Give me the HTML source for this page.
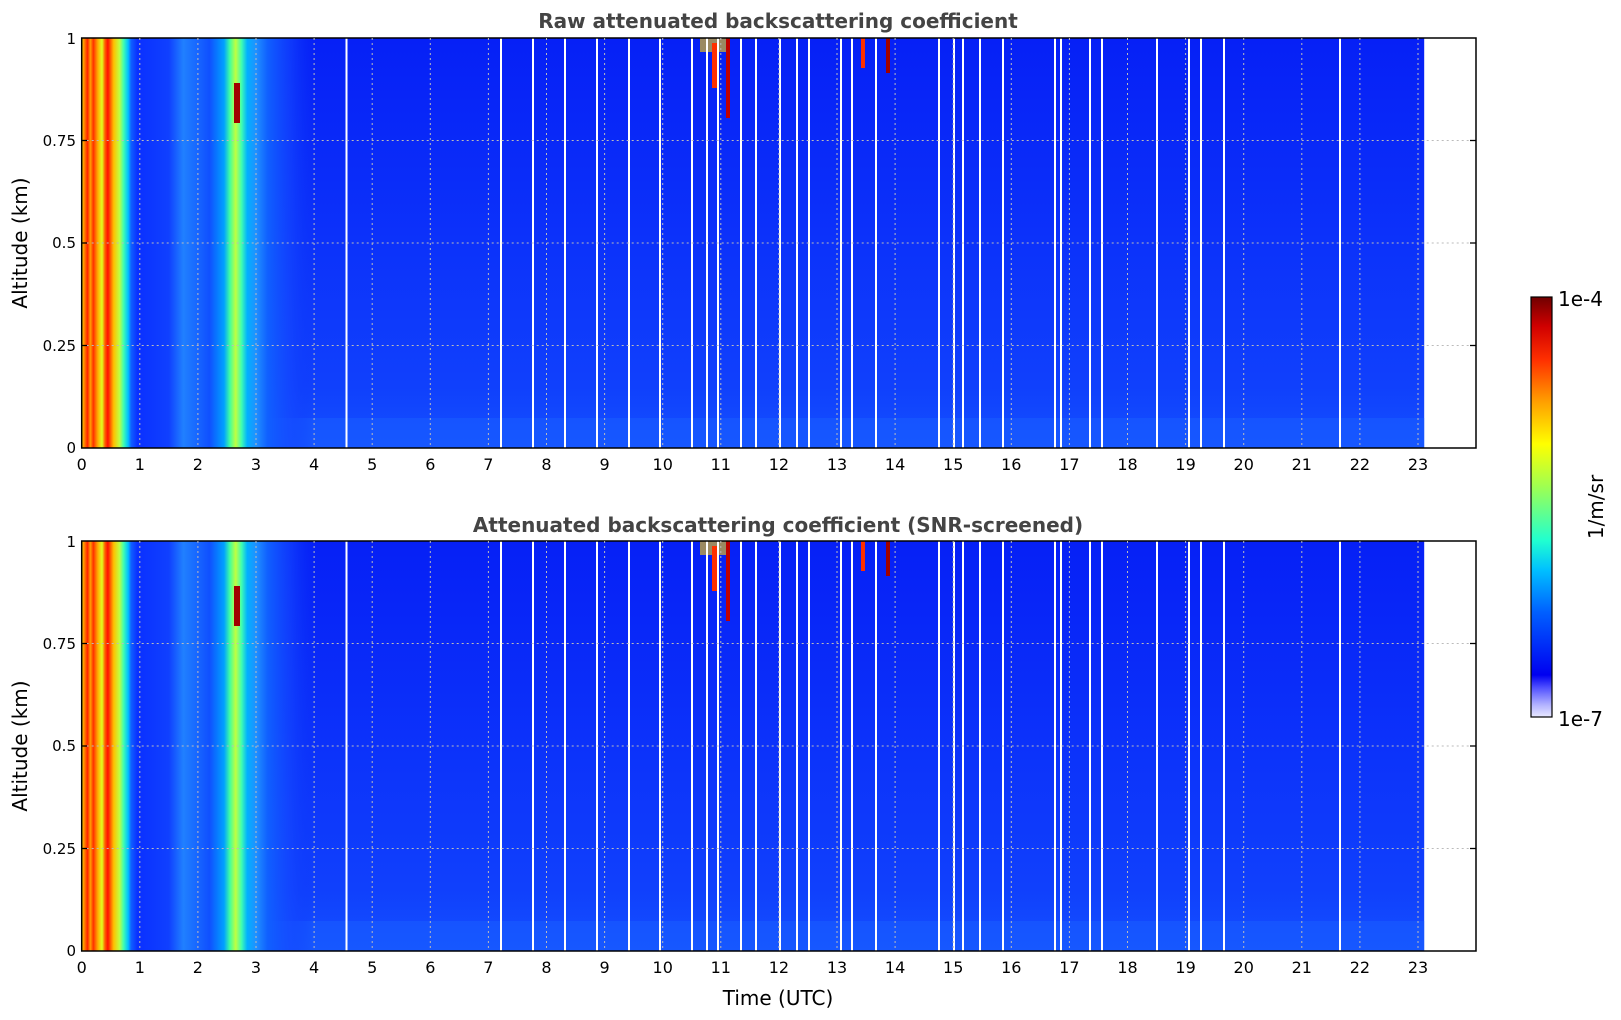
<!DOCTYPE html>
<html><head><meta charset="utf-8"><style>
html,body{margin:0;padding:0;background:#fff;width:1621px;height:1020px;overflow:hidden}
text{font-family:"DejaVu Sans","Liberation Sans",sans-serif}
</style></head><body>
<svg width="1621" height="1020" viewBox="0 0 1621 1020" xmlns="http://www.w3.org/2000/svg">
<defs>
<linearGradient id="bg" x1="0" y1="0" x2="0" y2="1">
<stop offset="0" stop-color="#0620f6"/><stop offset="0.5" stop-color="#0c32fa"/><stop offset="0.85" stop-color="#1040fc"/><stop offset="1" stop-color="#1450ff"/>
</linearGradient>
<linearGradient id="left" x1="0" y1="0" x2="1" y2="0">
<stop offset="0" stop-color="#ffd000"/><stop offset="0.0125" stop-color="#ff8000"/><stop offset="0.025" stop-color="#ff2000"/><stop offset="0.0375" stop-color="#ffa000"/><stop offset="0.05" stop-color="#ff3000"/><stop offset="0.07" stop-color="#ffb000"/><stop offset="0.0875" stop-color="#e0ff20"/><stop offset="0.1" stop-color="#ff6000"/><stop offset="0.1125" stop-color="#ff1000"/><stop offset="0.1375" stop-color="#ffc000"/><stop offset="0.1625" stop-color="#c0ff40"/><stop offset="0.18" stop-color="#40ffb0"/><stop offset="0.2" stop-color="#00c0ff"/><stop offset="0.2125" stop-color="#1060ff"/><stop offset="0.24" stop-color="#0a30ff"/><stop offset="0.375" stop-color="#1040ff"/><stop offset="0.4375" stop-color="#2080ff"/><stop offset="0.55" stop-color="#1050ff"/><stop offset="0.6125" stop-color="#00a0ff"/><stop offset="0.6375" stop-color="#40ffa0"/><stop offset="0.6625" stop-color="#c0ff40"/><stop offset="0.6875" stop-color="#40ffb0"/><stop offset="0.7125" stop-color="#00b0ff"/><stop offset="0.75" stop-color="#2090ff"/><stop offset="0.8" stop-color="#1060ff"/><stop offset="0.9" stop-color="#1448ff" stop-opacity="0.6"/><stop offset="1" stop-color="#0c34f8" stop-opacity="0"/>
</linearGradient>
<linearGradient id="cb" x1="0" y1="1" x2="0" y2="0">
<stop offset="0" stop-color="#e8e8ff"/><stop offset="0.03" stop-color="#b0b0ff"/><stop offset="0.07" stop-color="#5050ff"/><stop offset="0.1" stop-color="#0000f0"/><stop offset="0.25" stop-color="#0060ff"/><stop offset="0.35" stop-color="#00c0ff"/><stop offset="0.42" stop-color="#20ffd0"/><stop offset="0.55" stop-color="#a0ff50"/><stop offset="0.65" stop-color="#ffff00"/><stop offset="0.75" stop-color="#ffa000"/><stop offset="0.85" stop-color="#ff3000"/><stop offset="0.93" stop-color="#d00000"/><stop offset="1" stop-color="#700000"/>
</linearGradient>
<g id="panel">
<rect x="81.7" y="0" width="1342.5" height="410" fill="url(#bg)"/>
<rect x="81.7" y="380" width="1342.5" height="30" fill="#1a60ff" opacity="0.5"/>
<rect x="81.7" y="0" width="232.4" height="410" fill="url(#left)"/>
<rect x="700" y="0" width="28" height="14" fill="#ffd000" opacity="0.6"/>
<rect x="712" y="5" width="5" height="45" fill="#ff3000"/>
<rect x="726" y="0" width="4" height="80" fill="#c00000"/><rect x="861" y="0" width="4" height="30" fill="#ff3000"/>
<rect x="886" y="0" width="4" height="35" fill="#a00000"/><rect x="234" y="45" width="6" height="40" fill="#a00000"/>
<g fill="#fff">
<rect x="345.5" y="0" width="2" height="410"/><rect x="500" y="0" width="2" height="410"/><rect x="532" y="0" width="2" height="410"/><rect x="564" y="0" width="2" height="410"/><rect x="596" y="0" width="2" height="410"/><rect x="628" y="0" width="2" height="410"/><rect x="659" y="0" width="2" height="410"/><rect x="691" y="0" width="2" height="410"/><rect x="706" y="0" width="2" height="410"/><rect x="717" y="0" width="2" height="410"/><rect x="740" y="0" width="2" height="410"/><rect x="755" y="0" width="2" height="410"/><rect x="779" y="0" width="2" height="410"/><rect x="796" y="0" width="2" height="410"/><rect x="808" y="0" width="2" height="410"/><rect x="840" y="0" width="2" height="410"/><rect x="851" y="0" width="2" height="410"/><rect x="875" y="0" width="2" height="410"/><rect x="938" y="0" width="2" height="410"/><rect x="953" y="0" width="2" height="410"/><rect x="962" y="0" width="2" height="410"/><rect x="979" y="0" width="2" height="410"/><rect x="1002" y="0" width="2" height="410"/><rect x="1054" y="0" width="2" height="410"/><rect x="1060" y="0" width="2" height="410"/><rect x="1089" y="0" width="2" height="410"/><rect x="1101" y="0" width="2" height="410"/><rect x="1156" y="0" width="2" height="410"/><rect x="1188" y="0" width="2" height="410"/><rect x="1200" y="0" width="2" height="410"/><rect x="1223" y="0" width="2" height="410"/><rect x="1339" y="0" width="2" height="410"/>
</g>
<g stroke="#bbb" stroke-width="1" stroke-dasharray="2,3">
<line x1="81.7" y1="102.5" x2="1476" y2="102.5"/><line x1="81.7" y1="205" x2="1476" y2="205"/><line x1="81.7" y1="307.5" x2="1476" y2="307.5"/>
</g>
<rect x="81.7" y="0" width="1394.3" height="410" fill="none" stroke="#000" stroke-width="1.5"/>
<g stroke="#000" stroke-width="1.3">
<line x1="81.7" y1="102.5" x2="87" y2="102.5"/><line x1="81.7" y1="205" x2="87" y2="205"/><line x1="81.7" y1="307.5" x2="87" y2="307.5"/>
<line x1="1476" y1="102.5" x2="1470" y2="102.5"/><line x1="1476" y1="205" x2="1470" y2="205"/><line x1="1476" y1="307.5" x2="1470" y2="307.5"/>
</g>
<g font-size="15" text-anchor="end" fill="#000">
<text x="76" y="6">1</text><text x="76" y="108">0.75</text><text x="76" y="210">0.5</text><text x="76" y="313">0.25</text><text x="76" y="415">0</text>
</g>
<text transform="translate(27,205) rotate(-90)" font-size="20" text-anchor="middle">Altitude (km)</text>
</g>
</defs>
<text x="778" y="28" font-size="20" font-weight="bold" fill="#444" text-anchor="middle">Raw attenuated backscattering coefficient</text>
<use href="#panel" x="0" y="38"/>
<text x="778" y="532" font-size="20" font-weight="bold" fill="#444" text-anchor="middle">Attenuated backscattering coefficient (SNR-screened)</text>
<use href="#panel" x="0" y="541"/>
<g id="xt">
<g stroke="#bbb" stroke-dasharray="2,3">
<line x1="139.8" y1="38" x2="139.8" y2="448"/><line x1="197.9" y1="38" x2="197.9" y2="448"/><line x1="256" y1="38" x2="256" y2="448"/><line x1="314.1" y1="38" x2="314.1" y2="448"/><line x1="372.2" y1="38" x2="372.2" y2="448"/><line x1="430.3" y1="38" x2="430.3" y2="448"/><line x1="488.4" y1="38" x2="488.4" y2="448"/><line x1="546.5" y1="38" x2="546.5" y2="448"/><line x1="604.6" y1="38" x2="604.6" y2="448"/><line x1="662.7" y1="38" x2="662.7" y2="448"/><line x1="720.8" y1="38" x2="720.8" y2="448"/><line x1="778.9" y1="38" x2="778.9" y2="448"/><line x1="837" y1="38" x2="837" y2="448"/><line x1="895.1" y1="38" x2="895.1" y2="448"/><line x1="953.2" y1="38" x2="953.2" y2="448"/><line x1="1011.3" y1="38" x2="1011.3" y2="448"/><line x1="1069.4" y1="38" x2="1069.4" y2="448"/><line x1="1127.5" y1="38" x2="1127.5" y2="448"/><line x1="1185.6" y1="38" x2="1185.6" y2="448"/><line x1="1243.7" y1="38" x2="1243.7" y2="448"/><line x1="1301.8" y1="38" x2="1301.8" y2="448"/><line x1="1359.9" y1="38" x2="1359.9" y2="448"/><line x1="1418" y1="38" x2="1418" y2="448"/>
</g>
<g font-size="16" text-anchor="middle">
<text x="81.7" y="470">0</text><text x="139.8" y="470">1</text><text x="197.9" y="470">2</text><text x="256" y="470">3</text><text x="314.1" y="470">4</text><text x="372.2" y="470">5</text><text x="430.3" y="470">6</text><text x="488.4" y="470">7</text><text x="546.5" y="470">8</text><text x="604.6" y="470">9</text><text x="662.7" y="470">10</text><text x="720.8" y="470">11</text><text x="778.9" y="470">12</text><text x="837" y="470">13</text><text x="895.1" y="470">14</text><text x="953.2" y="470">15</text><text x="1011.3" y="470">16</text><text x="1069.4" y="470">17</text><text x="1127.5" y="470">18</text><text x="1185.6" y="470">19</text><text x="1243.7" y="470">20</text><text x="1301.8" y="470">21</text><text x="1359.9" y="470">22</text><text x="1418" y="470">23</text>
</g>
</g>
<use href="#xt" x="0" y="503"/>
<text x="778" y="1005" font-size="20" text-anchor="middle">Time (UTC)</text>
<rect x="1531" y="297" width="21" height="420" fill="url(#cb)" stroke="#000" stroke-width="1.2"/>
<text x="1558" y="306" font-size="20">1e-4</text>
<text x="1558" y="726" font-size="20">1e-7</text>
<text transform="translate(1603,507) rotate(-90)" font-size="20" text-anchor="middle">1/m/sr</text>
</svg>
</body></html>
